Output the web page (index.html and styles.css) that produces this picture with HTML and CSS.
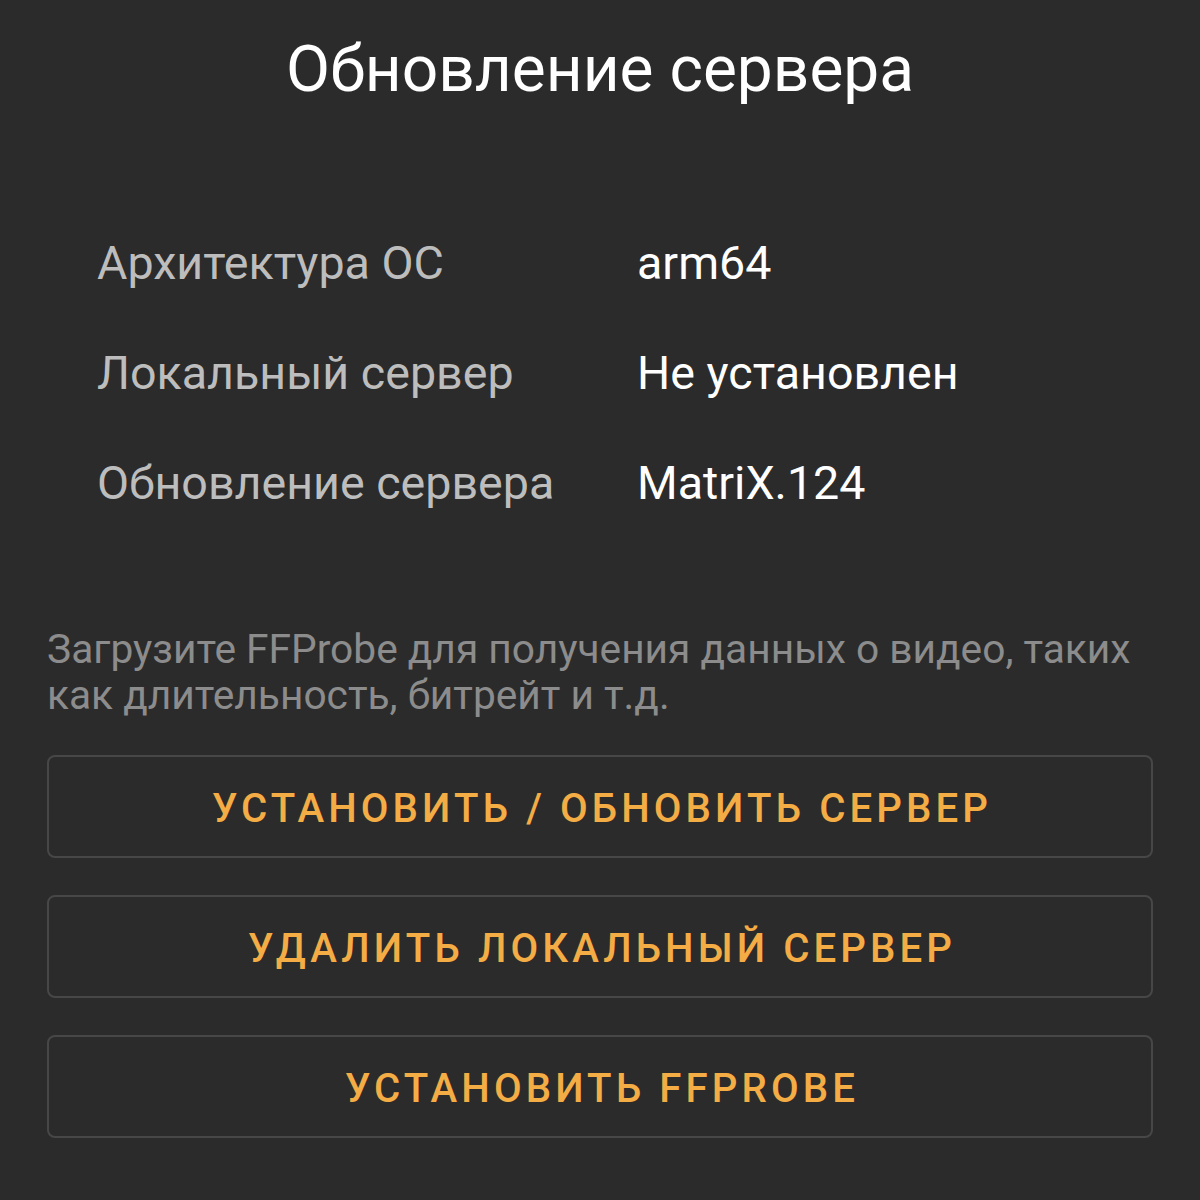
FILE: index.html
```html
<!DOCTYPE html>
<html lang="ru">
<head>
  <meta charset="UTF-8" />
  <meta name="viewport" content="width=device-width, initial-scale=1.0"/>
  <title>Обновление сервера</title>
  <link rel="stylesheet" href="styles.css">
</head>
<body>
  <div class="screen">
    <h1 class="title">Обновление сервера</h1>

    <div class="info">
      <div class="info-label">Архитектура ОС</div>
      <div class="info-value">arm64</div>
      <div class="info-label">Локальный сервер</div>
      <div class="info-value">Не установлен</div>
      <div class="info-label">Обновление сервера</div>
      <div class="info-value">MatriX.124</div>
    </div>

    <p class="hint">Загрузите FFProbe для получения данных о видео, таких как длительность, битрейт и т.д.</p>

    <div class="actions">
      <button class="action">Установить / обновить сервер</button>
      <button class="action">Удалить локальный сервер</button>
      <button class="action">Установить FFProbe</button>
    </div>
  </div>
</body>
</html>
```

FILE: styles.css
```css
body {
  margin: 0;
  background: #2b2b2b;
  font-family: Roboto, 'Noto Sans', sans-serif;
}
.screen {
  padding: 32px 47px 40px;
}
.title {
  margin: 0;
  font-size: 64px;
  font-weight: 400;
  line-height: 1.2;
  color: #ffffff;
  text-align: center;
}
.info {
  display: grid;
  grid-template-columns: 540px 1fr;
  margin: 99px 0 0 50px;
  font-size: 46.6px;
  line-height: 110px;
}
.info-label { color: #bdbdbd; }
.info-value { color: #ffffff; }
.hint {
  margin: 88px 0 0;
  font-size: 40.7px;
  line-height: 46px;
  color: #8c8c8c;
}
.actions {
  display: flex;
  flex-direction: column;
  gap: 37px;
  margin-top: 37px;
}
.action {
  height: 103px;
  padding: 5px 0 0 4px;
  background: transparent;
  border: 2px solid #474747;
  border-radius: 8px;
  font-family: Roboto, sans-serif;
  font-size: 40.2px;
  font-weight: 500;
  letter-spacing: 4.1px;
  text-transform: uppercase;
  color: #f4ac45;
  cursor: pointer;
}
```
